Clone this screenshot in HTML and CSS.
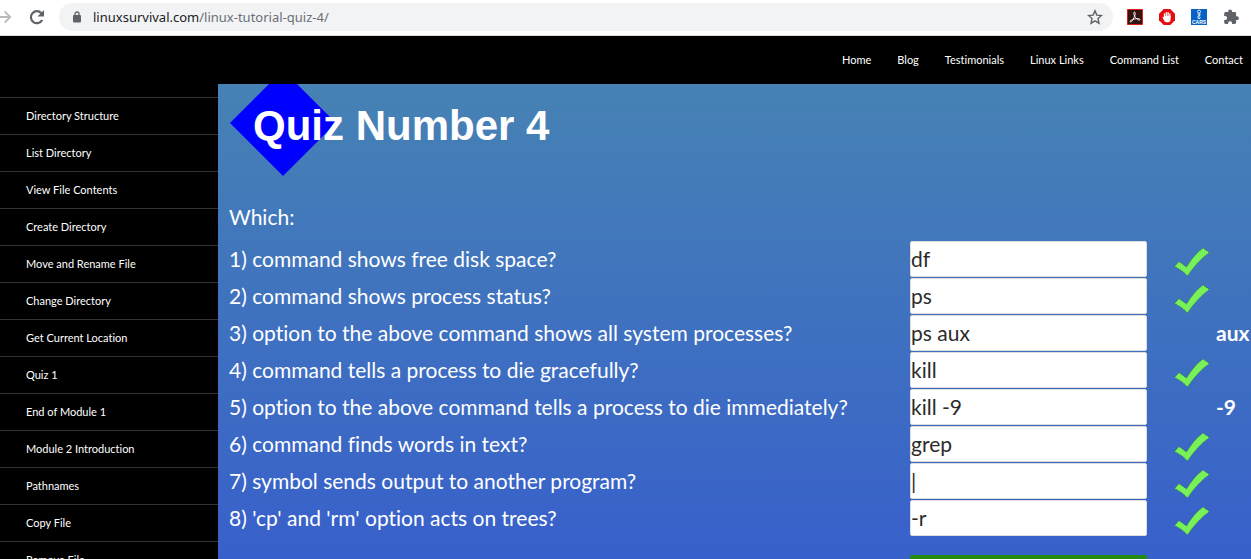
FILE: index.html
```html
<!DOCTYPE html>
<html lang="en">
<head>
<meta charset="utf-8">
<title>Linux Tutorial Quiz 4</title>
<link rel="stylesheet" href="styles.css">
</head>
<body>
<div class="window">
  <div class="toolbar">
    <button class="tool-button forward" type="button" aria-label="Forward">
      <svg width="14" height="16" viewBox="0 0 14 16" fill="none" stroke="#b9babc" stroke-width="2"><path d="M0 8h11M5 2l6 6-6 6"/></svg>
    </button>
    <button class="tool-button" type="button" aria-label="Reload">
      <svg width="16" height="16" viewBox="0 0 16 16"><path d="M13.2 11A6 6 0 1 1 12.400 4.200" fill="none" stroke="#5f6368" stroke-width="2.200"/><path d="M15 1v6.500H8.500z" fill="#5f6368"/></svg>
    </button>
    <div class="address">
      <svg width="10" height="12" viewBox="0 0 10 12"><rect x="1" y="4" width="8" height="7.500" rx="1" fill="#5f6368"/><path d="M3 4.500V3a2 2 0 0 1 4 0v1.500" fill="none" stroke="#5f6368" stroke-width="1.300"/></svg>
      <span class="url"><span class="host">linuxsurvival.com</span>/linux-tutorial-quiz-4/</span>
      <button class="tool-button" type="button" aria-label="Bookmark">
        <svg width="16" height="16" viewBox="0 0 16 16" fill="none" stroke="#5f6368" stroke-width="1.400"><path d="M8 1.800l1.800 4.300 4.700.4-3.500 3.100 1 4.600-4-2.400-4 2.400 1-4.600-3.500-3.100 4.700-.4z"/></svg>
      </button>
    </div>
    <div class="extensions">
      <button class="tool-button" type="button" aria-label="PDF">
        <svg width="16" height="16" viewBox="0 0 16 16"><path fill="#33120f" stroke="#d81e12" d="M.5.500h15v15H.500z"/><path d="M7.300 3c1.700 0 .8 2.600.3 4.100-.8 2.200-2 4.600-3.200 5.600-1.200.9-1.900-.5-.5-1.400 2-1.200 5.500-1.900 7.900-1.600 1.900.3 1.300 1.700-.2 1.200C9.400 10.200 7.400 7.500 6.900 5c-.2-1.100-.1-2 .4-2z" fill="none" stroke="#fff" stroke-width=".9"/></svg>
      </button>
      <button class="tool-button" type="button" aria-label="Ad blocker">
        <svg width="16" height="16" viewBox="0 0 16 16"><path fill="#e60d12" d="M4.700 0h6.600L16 4.700v6.600L11.300 16H4.700L0 11.300V4.700z"/><path d="M5.500 8V5M7.300 7.500V3.600M9.100 7.500V3.600M10.900 8V5" stroke="#fff" stroke-width="1.300" stroke-linecap="round"/><path fill="#fff" d="M4.900 7h6.700v3.500c0 1.500-1 2.700-2.500 2.700H7.500c-1.300 0-2-.8-2.600-2L3.700 8.800c-.3-.8.500-1.200 1.100-.5z"/></svg>
      </button>
      <button class="tool-button" type="button" aria-label="CARS">
        <svg width="16" height="16" viewBox="0 0 16 16"><path fill="#0862c4" d="M0 0h16v16H0z"/><g fill="none" stroke="#d5e8fa"><circle cx="8" cy="2.600" r="1.500"/><path d="M6.500 5h3M6.500 7.500l3-1.500M8 4.500v5.500M6.500 8.500c0 1.500 3 1.500 3 0"/></g><text x="8" y="15" class="ext-text">CARS</text></svg>
      </button>
      <button class="tool-button" type="button" aria-label="Extensions">
        <svg width="16" height="16" viewBox="0 0 16 16"><path fill="#5f6368" d="M14 7.300h-.9V4.600c0-.9-.6-1.500-1.500-1.500H9V2.300a1.900 1.900 0 0 0-3.800 0v.8H2.600c-.8 0-1.400.6-1.400 1.500v2.500h.9a2 2 0 0 1 0 4h-.9v2.500c0 .9.600 1.400 1.400 1.400h2.500v-.8a2 2 0 0 1 4 0v.8h2.500c.9 0 1.500-.5 1.500-1.400V11.100h.9a1.900 1.900 0 0 0 0-3.800z"/></svg>
      </button>
    </div>
  </div>

  <nav class="top-nav" aria-label="Site">
    <a href="#">Home</a>
    <a href="#">Blog</a>
    <a href="#">Testimonials</a>
    <a href="#">Linux Links</a>
    <a href="#">Command List</a>
    <a href="#">Contact</a>
  </nav>

  <div class="page">
    <nav class="side-nav" aria-label="Tutorial">
      <a href="#">Directory Structure</a>
      <a href="#">List Directory</a>
      <a href="#">View File Contents</a>
      <a href="#">Create Directory</a>
      <a href="#">Move and Rename File</a>
      <a href="#">Change Directory</a>
      <a href="#">Get Current Location</a>
      <a href="#">Quiz 1</a>
      <a href="#">End of Module 1</a>
      <a href="#">Module 2 Introduction</a>
      <a href="#">Pathnames</a>
      <a href="#">Copy File</a>
      <a href="#">Remove File</a>
    </nav>

    <main class="quiz">
      <svg class="symbols" aria-hidden="true"><symbol id="check" viewBox="0 0 36 30"><path d="M.5 19.500L5 14.500l7.500 5.500Q20 7.500 29 1l6.500 4.500Q24 13.500 13.500 29Q8 23 .5 19.500z" fill="#78f058" stroke="#2f6b4f" stroke-width=".8" stroke-dasharray="1.500 1"/></symbol></svg>
      <h1 class="title">Quiz Number 4</h1>
      <form class="form">
        <p class="lead">Which:</p>
        <div class="row">
          <label for="q1">1) command shows free disk space?</label>
          <input id="q1" type="text" value="df">
          <svg class="mark"><use href="#check"/></svg>
        </div>
        <div class="row">
          <label for="q2">2) command shows process status?</label>
          <input id="q2" type="text" value="ps">
          <svg class="mark"><use href="#check"/></svg>
        </div>
        <div class="row">
          <label for="q3">3) option to the above command shows all system processes?</label>
          <input id="q3" type="text" value="ps aux">
          <output class="answer" for="q3">aux</output>
        </div>
        <div class="row">
          <label for="q4">4) command tells a process to die gracefully?</label>
          <input id="q4" type="text" value="kill">
          <svg class="mark"><use href="#check"/></svg>
        </div>
        <div class="row">
          <label for="q5">5) option to the above command tells a process to die immediately?</label>
          <input id="q5" type="text" value="kill -9">
          <output class="answer" for="q5">-9</output>
        </div>
        <div class="row">
          <label for="q6">6) command finds words in text?</label>
          <input id="q6" type="text" value="grep">
          <svg class="mark"><use href="#check"/></svg>
        </div>
        <div class="row">
          <label for="q7">7) symbol sends output to another program?</label>
          <input id="q7" type="text" value="|">
          <svg class="mark"><use href="#check"/></svg>
        </div>
        <div class="row">
          <label for="q8">8) 'cp' and 'rm' option acts on trees?</label>
          <input id="q8" type="text" value="-r">
          <svg class="mark"><use href="#check"/></svg>
        </div>
        <div class="row actions">
          <button class="submit" type="submit" aria-label="Check answers"></button>
        </div>
      </form>
    </main>
  </div>
</div>
</body>
</html>
```
FILE: styles.css
```css
* {
  box-sizing: border-box;
}

body {
  margin: 0;
  font-family: Lato, "Liberation Sans", sans-serif;
  font-variant-ligatures: none;
}

a {
  color: #fff;
  text-decoration: none;
}

.window {
  display: flex;
  flex-direction: column;
  height: 100vh;
  overflow: hidden;
}

/* Browser toolbar */
.toolbar {
  flex: none;
  display: flex;
  align-items: center;
  gap: 16px;
  height: 36px;
  padding: 0 12px 2px 0;
  border-bottom: 1px solid #dadce0;
  background: #fff;
}

.tool-button {
  display: flex;
  padding: 0;
  border: 0;
  background: none;
}

.forward {
  width: 13px;
}

.address {
  flex: 1;
  display: flex;
  align-items: center;
  gap: 11px;
  height: 28px;
  margin-left: -2px;
  padding: 0 10px 0 13px;
  border-radius: 14px;
  background: #f1f3f4;
}

.url {
  flex: 1;
  font: 13px/20px "Noto Sans", "Open Sans", sans-serif;
  color: #6b6f74;
}

.host {
  color: #202124;
}

.extensions {
  display: flex;
  gap: 16px;
  margin-left: -2px;
}

.ext-text {
  font: bold 5px "Liberation Sans", sans-serif;
  fill: #fff;
  text-anchor: middle;
}

/* Site navigation */
.top-nav {
  flex: none;
  display: flex;
  justify-content: flex-end;
  gap: 26px;
  padding-right: 8px;
  background: #000;
  font-size: 11px;
  line-height: 48px;
}

.page {
  flex: 1;
  display: flex;
  min-height: 0;
}

.side-nav {
  flex: none;
  width: 218px;
  padding-top: 13px;
  background: #000;
  font-size: 11px;
  line-height: 36px;
}

.side-nav a {
  display: block;
  padding-left: 26px;
  border-top: 1px solid #333;
}

/* Quiz */
.quiz {
  flex: 1;
  min-width: 0;
  overflow: hidden;
  background: linear-gradient(#4682b4, #3860cb);
  color: #fff;
}

.symbols {
  display: block;
  width: 0;
  height: 0;
}

.title {
  position: relative;
  isolation: isolate;
  margin: 0;
  padding-left: 35px;
  font: bold 42px/84px "Liberation Sans", sans-serif;
}

.title::before {
  content: "";
  position: absolute;
  z-index: -1;
  top: -14px;
  left: 12px;
  width: 106px;
  height: 106px;
  background: #00f;
  clip-path: polygon(50% 0, 100% 50%, 50% 100%, 0 50%);
}

.form {
  padding: 31px 0 0 11px;
  font-size: 21px;
}

.lead {
  margin: 0;
  padding-bottom: 5px;
  line-height: 36px;
}

.row {
  display: grid;
  grid-template-columns: minmax(0, 1fr) 237px 69px 35px;
  align-items: center;
  height: 37px;
}

.row input {
  width: 100%;
  height: 36px;
  padding: 0;
  border: 1px solid #ddd;
  border-radius: 2px;
  background: #fff;
  color: #2b2b2b;
  font: inherit;
}

.mark {
  width: 36px;
  height: 30px;
  margin: 6px 0 0 27px;
}

.answer {
  grid-column: 4;
  font-weight: 700;
}

.actions {
  height: 60px;
}

.submit {
  grid-column: 2;
  height: 36px;
  margin-top: 14px;
  border: 0;
  border-radius: 2px;
  background: #248a10;
}
```
